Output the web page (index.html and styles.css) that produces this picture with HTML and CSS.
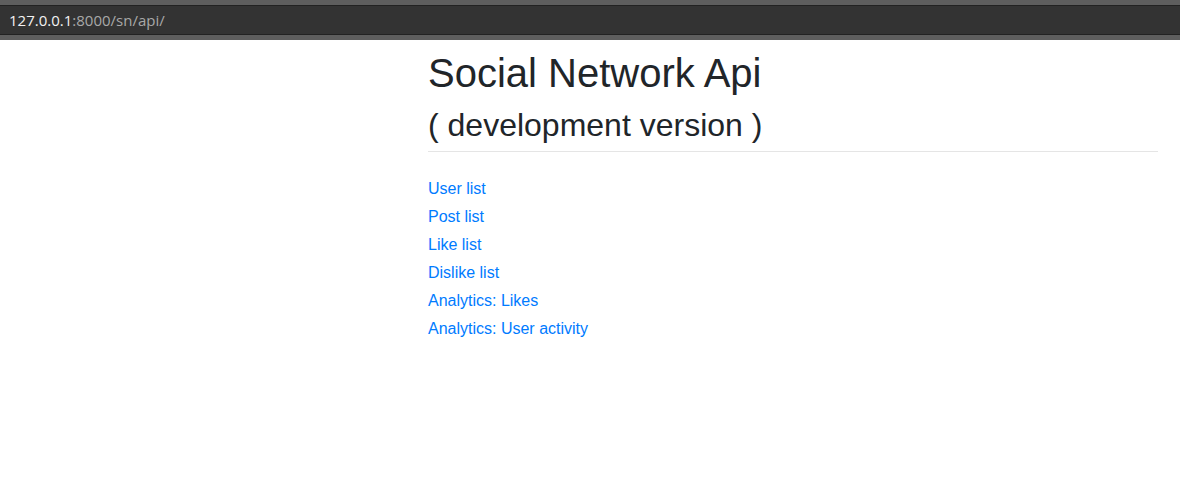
FILE: index.html
```html
<!DOCTYPE html>
<html>
<head>
<meta charset="utf-8">
<title>Social Network Api</title>
<link rel="stylesheet" href="styles.css">
</head>
<body>
<div class="urlbar">
  <div class="urlfield"><span class="host">127.0.0.1</span><span class="path">:8000/sn/api/</span></div>
</div>
<main class="content">
  <h1 class="title">Social Network Api</h1>
  <h2 class="subtitle">( development version )</h2>
  <hr class="divider">
  <ul class="links">
    <li><a href="#">User list</a></li>
    <li><a href="#">Post list</a></li>
    <li><a href="#">Like list</a></li>
    <li><a href="#">Dislike list</a></li>
    <li><a href="#">Analytics: Likes</a></li>
    <li><a href="#">Analytics: User activity</a></li>
  </ul>
</main>
</body>
</html>
```

FILE: styles.css
```css
* { box-sizing: border-box; }
html, body { margin: 0; padding: 0; background: #fff; }
body { font-family: "Liberation Sans", Arial, sans-serif; color: #212529; }

.urlbar {
  height: 40px;
  background: #5e5e5e;
  padding: 5px 0;
}
.urlfield {
  height: 30px;
  background: #333333;
  border-top: 1px solid #222;
  border-bottom: 1px solid #222;
  display: flex;
  align-items: center;
  padding-left: 9px;
  font-family: "Open Sans", "DejaVu Sans", sans-serif;
  font-size: 15px;
}
.host { color: #f2f2f2; }
.path { color: #a8a8a8; }

.content {
  margin-left: 428px;
  width: 730px;
  padding-top: 9px;
}
.title {
  margin: 0 0 9px;
  font-size: 40px;
  font-weight: 400;
  line-height: 48px;
}
.subtitle {
  margin: 0;
  font-size: 32px;
  font-weight: 400;
  line-height: 38px;
}
.divider {
  margin: 7px 0 23px;
  border: 0;
  border-top: 1px solid #e5e5e5;
}
.links {
  list-style: none;
  margin: 0;
  padding: 0;
}
.links li {
  font-size: 16px;
  line-height: 28px;
}
.links a {
  color: #007bff;
  text-decoration: none;
}
```
